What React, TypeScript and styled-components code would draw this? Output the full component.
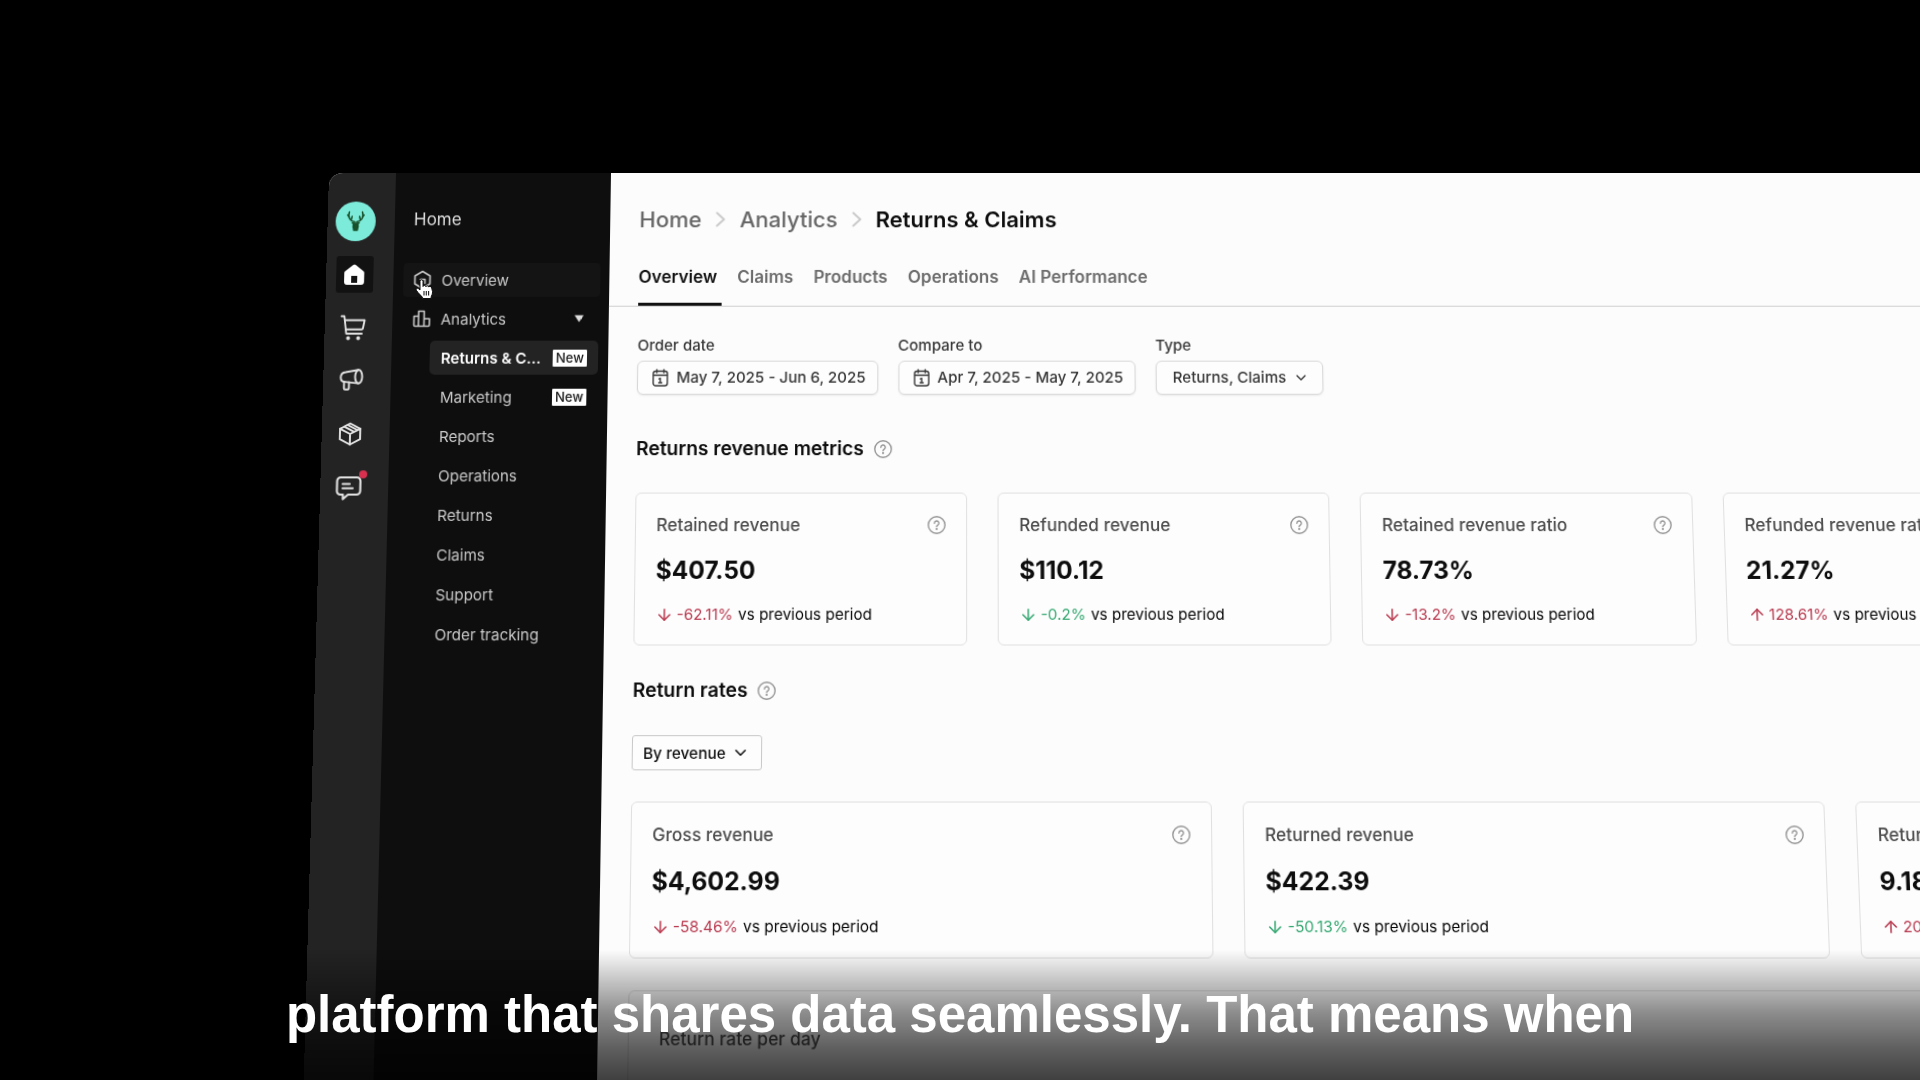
import React from "react";
import styled, { createGlobalStyle } from "styled-components";
import { ArrowDown, ArrowUp, ChevronDown } from "lucide-react";

const GlobalStyle = createGlobalStyle`
  *, *::before, *::after { box-sizing: border-box; }
  body {
    margin: 0;
    background: #000;
    font-family: Inter, "Liberation Sans", sans-serif;
  }
  h1, h2, h3, p, ul, ol, dl, dd { margin: 0; padding: 0; }
  ul, ol { list-style: none; }
  a { color: inherit; text-decoration: none; }
  button, select { font: inherit; color: inherit; }
`;

const Screen = styled.div`
  position: relative;
  height: 100vh;
  overflow: hidden;
  padding-top: 173px;
  background: #000;
`;

const AppWindow = styled.div`
  display: grid;
  grid-template-columns: 67px 215px minmax(0, 1fr);
  min-height: 100vh;
  margin-left: 329px;
  margin-right: -26.3%;
  border-radius: 14px 0 0 0;
  overflow: hidden;
  background: #fcfcfc;
  transform: perspective(4000px) rotateX(10deg);
  transform-origin: calc(50vw - 329px) 0;
`;

/* Icon rail */

const Rail = styled.nav`
  display: flex;
  flex-direction: column;
  align-items: center;
  gap: 16px;
  padding: 29px 11px 0 0;
  background: #232323;
`;

const Logo = styled.a`
  display: grid;
  place-items: center;
  width: 40px;
  height: 40px;
  margin-bottom: -1px;
  border-radius: 50%;
  background: #7debd9;
`;

const RailLink = styled.a<{ $active?: boolean }>`
  position: relative;
  display: grid;
  place-items: center;
  width: 37px;
  height: 37px;
  border-radius: 3px;
  color: #e2e2e2;
  background: ${(p) => (p.$active ? "#121212" : "transparent")};
`;

const AlertDot = styled.span`
  position: absolute;
  top: 2px;
  right: 1px;
  width: 8px;
  height: 8px;
  border-radius: 50%;
  background: #d9304f;
`;

/* Side navigation */

const SideNav = styled.nav`
  padding: 35px 8px 0;
  background: #0e0e0e;
  color: #c9c9c9;
`;

const SideTitle = styled.h2`
  padding-left: 11px;
  margin-bottom: 32px;
  font-size: 17px;
  line-height: 24px;
  font-weight: 400;
  color: #dedede;
`;

const NavList = styled.ul`
  display: flex;
  flex-direction: column;
  gap: 5px;
`;

const NavItem = styled.a<{ $hover?: boolean }>`
  display: flex;
  align-items: center;
  gap: 10px;
  width: 196px;
  height: 34px;
  margin-left: 2px;
  padding: 0 16px 0 10px;
  border-radius: 4px;
  font-size: 15px;
  background: ${(p) => (p.$hover ? "#141414" : "transparent")};
`;

const NavToggle = styled(NavItem)`
  border: 0;
  text-align: left;
  cursor: pointer;
`;

const NavText = styled.span`
  flex: 1;
  min-width: 0;
  overflow: hidden;
  text-overflow: ellipsis;
  white-space: nowrap;
`;

const SubItem = styled.a<{ $current?: boolean }>`
  display: flex;
  align-items: center;
  gap: 8px;
  width: 167px;
  height: 34px;
  margin-left: 30px;
  padding: 0 11px 0 11px;
  border-radius: 5px;
  font-size: 15px;
  font-weight: ${(p) => (p.$current ? 600 : 400)};
  color: ${(p) => (p.$current ? "#fff" : "inherit")};
  background: ${(p) => (p.$current ? "#232323" : "transparent")};
`;

const Badge = styled.span`
  padding: 0 3px;
  border-radius: 1px;
  background: #fff;
  color: #1a1a1a;
  font-size: 13px;
  line-height: 17px;
  font-weight: 500;
`;

/* Main column */

const Main = styled.main`
  color: #050505;
`;

const Header = styled.header`
  padding: 33px 29px 0;
  border-bottom: 1px solid #cfcfcf;
`;

const Crumbs = styled.ol`
  display: flex;
  align-items: center;
  gap: 14px;
  font-size: 22px;
  line-height: 28px;
  color: #666;
  font-weight: 500;
`;

const Crumb = styled.li<{ $current?: boolean }>`
  font-weight: ${(p) => (p.$current ? 600 : 500)};
  color: ${(p) => (p.$current ? "#0d0d0d" : "inherit")};
`;

const Tabs = styled.div`
  display: flex;
  gap: 15px;
  margin-top: 29px;
`;

const Tab = styled.a<{ $current?: boolean }>`
  padding: 4px 5px 15px 0;
  font-size: 17px;
  line-height: 22px;
  font-weight: 600;
  color: ${(p) => (p.$current ? "#111" : "#6c6c6c")};
  border-bottom: 3px solid ${(p) => (p.$current ? "#111" : "transparent")};
`;

const Body = styled.div`
  display: flex;
  flex-direction: column;
  gap: 30px;
  padding: 29px;
`;

const Filters = styled.div`
  display: flex;
  gap: 20px;
  margin-bottom: 10px;
`;

const Field = styled.div`
  display: flex;
  flex-direction: column;
  align-items: flex-start;
  gap: 5px;
  font-size: 15px;
  line-height: 20px;
  color: #363636;
  font-weight: 500;
`;

const DateButton = styled.button`
  display: flex;
  align-items: center;
  gap: 8px;
  height: 34px;
  padding: 0 11px 0 14px;
  border: 1px solid #d8d8d8;
  border-radius: 6px;
  background: #fdfdfd;
  box-shadow: 0 1px 2px rgba(0, 0, 0, 0.08);
  cursor: pointer;
`;

const SelectWrap = styled.span<{ $compact?: boolean }>`
  display: inline-grid;
  align-items: center;
  color: ${(p) => (p.$compact ? "#0d0d0d" : "#363636")};
  select, svg { grid-area: 1 / 1; }
  svg {
    justify-self: end;
    margin-right: ${(p) => (p.$compact ? 12 : 14)}px;
    pointer-events: none;
  }
`;

const Select = styled.select<{ $compact?: boolean }>`
  appearance: none;
  height: 34px;
  padding: ${(p) => (p.$compact ? "0 34px 0 10px" : "0 35px 0 16px")};
  border: 1px solid ${(p) => (p.$compact ? "#c9c9c9" : "#d8d8d8")};
  border-radius: ${(p) => (p.$compact ? 3 : 6)}px;
  background: #fdfdfd;
  box-shadow: ${(p) => (p.$compact ? "none" : "0 1px 2px rgba(0, 0, 0, 0.08)")};
  font-size: 15px;
  font-weight: 500;
`;

const Toolbar = styled.div`
  display: flex;
`;

const SectionTitle = styled.h2`
  display: flex;
  align-items: center;
  gap: 10px;
  font-size: 19px;
  line-height: 27px;
  font-weight: 600;
  color: #0d0d0d;
`;

const HelpButton = styled.button`
  display: inline-flex;
  padding: 0;
  border: 0;
  background: none;
  color: #979797;
  cursor: help;
`;

const Cards = styled.div<{ $columns: number }>`
  display: grid;
  grid-template-columns: repeat(${(p) => p.$columns}, minmax(0, 1fr));
  gap: 30px;
`;

const Card = styled.article`
  display: flex;
  flex-direction: column;
  gap: 14px;
  padding: 20px;
  border: 1px solid #e0e0e0;
  border-radius: 6px;
  background: #fdfdfd;
`;

const CardHead = styled.div`
  display: flex;
  align-items: center;
  justify-content: space-between;
`;

const CardTitle = styled.h3`
  font-size: 17px;
  line-height: 22px;
  font-weight: 500;
  color: #4d4d4d;
  white-space: nowrap;
`;

const Value = styled.p`
  font-size: 24px;
  line-height: 40px;
  font-weight: 700;
  color: #0d0d0d;
`;

const Change = styled.p`
  display: flex;
  align-items: center;
  gap: 5px;
  font-size: 15px;
  line-height: 16px;
  white-space: nowrap;
`;

const Delta = styled.span<{ $good?: boolean }>`
  display: flex;
  align-items: center;
  gap: 3px;
  color: ${(p) => (p.$good ? "#35a872" : "#b93a50")};
`;

const ChartCard = styled.section`
  min-height: 300px;
  padding: 34px 29px;
  border: 1px solid #e0e0e0;
  border-radius: 6px;
`;

/* Overlays */

const Pointer = styled.svg`
  position: absolute;
  top: 278px;
  left: 415px;
`;

const CaptionBar = styled.div`
  position: absolute;
  inset: auto 0 0 0;
  height: 130px;
  padding-top: 37px;
  text-align: center;
  font-family: "Liberation Sans", Arial, sans-serif;
  font-size: 51px;
  line-height: 56px;
  font-weight: 700;
  color: #fff;
  white-space: nowrap;
  background: linear-gradient(
    rgba(0, 0, 0, 0) 0%,
    rgba(0, 0, 0, 0.26) 28%,
    rgba(0, 0, 0, 0.44) 48%,
    rgba(0, 0, 0, 0.62) 75%,
    rgba(0, 0, 0, 0.75) 100%
  );
`;

/* Drawings */

const line = {
  fill: "none",
  stroke: "currentColor",
  strokeLinecap: "round" as const,
  strokeLinejoin: "round" as const,
};

const DeerIcon = () => (
  <svg width="24" height="24" viewBox="0 0 24 24" {...line} stroke="#17502a" strokeWidth="1.500">
    <path d="M11 12.500C7 12 3.500 8.500 5.500 2.500M5.500 8L3.800 5.500M7.500 10.500L8.300 7" />
    <path d="M13 12.500C17 12 20.500 8.500 18.500 2.500M18.500 8L20.200 5.500M16.500 10.500L15.700 7" />
    <path d="M8.500 13.500L11 14.500M15.500 13.500L13 14.500" />
    <path d="M10 14h4l.5 3-.8 4h-3.400l-.8-4z" fill="#17502a" />
  </svg>
);

const HouseIcon = () => (
  <svg width="22" height="22" viewBox="0 0 22 22">
    <path
      fill="#fff"
      fillRule="evenodd"
      d="M9.700 1a2 2 0 0 1 2.600 0l7.700 6.300a2.500 2.500 0 0 1 .9 2V18a3 3 0 0 1-3 3H4a3 3 0 0 1-3-3V9.300a2.500 2.500 0 0 1 .9-2zM8 12v7h6v-7z"
    />
  </svg>
);

const CartIcon = () => (
  <svg width="26" height="26" viewBox="0 0 26 26" {...line} strokeWidth="1.900">
    <path d="M1.500 1.500h2.800l2.200 17.500h15.500" />
    <path d="M4.800 5.500h19.700L23 13.500q-.2 1.200-1.400 1.200H6" />
    <circle cx="8.500" cy="23.500" r="1" fill="currentColor" />
    <circle cx="18.500" cy="23.500" r="1" fill="currentColor" />
  </svg>
);

const MegaphoneIcon = () => (
  <svg width="24" height="24" viewBox="0 1 24 24" {...line} strokeWidth="1.900">
    <ellipse cx="19" cy="9" rx="3.500" ry="6.700" />
    <path d="M18.500 2.300L6 4.500C3 4.800 1.300 7 1.300 9.800c0 2.700 1.500 4.300 4.200 4.300l13 1.500" />
    <path d="M4.700 14v6.500q0 1.300 1.300 1.300h2.300q1.300 0 1.300-1.300v-6" />
  </svg>
);

const BoxIcon = () => (
  <svg width="24" height="24" viewBox="0 0 24 24" {...line} strokeWidth="1.900">
    <path d="M12 1.500L22 6.800v10.400L12 22.500 2 17.200V6.800z" />
    <path d="M2 6.800l10 5.200 10-5.200M12 12v10.500M6.500 4.800l9.500 5M9.500 3l9.500 5" />
  </svg>
);

const ChatIcon = () => (
  <svg width="26" height="26" viewBox="0 0 26 26" {...line} strokeWidth="2.100">
    <path d="M5 3h16a3.500 3.500 0 0 1 3.500 3.500v10A3.500 3.500 0 0 1 21 20h-8.500L7.500 24.500V20H5a3.500 3.500 0 0 1-3.500-3.500v-10A3.500 3.500 0 0 1 5 3z" />
    <path d="M7 9.500h7M7 13.700h10" />
  </svg>
);

const HexHomeIcon = () => (
  <svg width="18" height="20" viewBox="0 0 18 20" {...line} strokeWidth="1.600">
    <path d="M9 1.500l7.500 4.500v8L9 18.500 1.500 14V6z" />
    <path d="M7 9.500h4.500v4" />
  </svg>
);

const BarsIcon = () => (
  <svg width="18" height="18" viewBox="0 0 18 18" {...line} strokeWidth="1.600">
    <path d="M6 16.500H2.500q-1 0-1-1V6.500H6zM6 16.500V1.500h5.500v15zM11.500 16.500H16q.8 0 .8-1V9h-5.300" />
  </svg>
);

const CaretIcon = () => (
  <svg width="9" height="8" viewBox="0 0 9 8" fill="#dedede">
    <path d="M0 .5h9L4.500 7.500z" />
  </svg>
);

const CrumbArrow = () => (
  <svg width="10" height="18" viewBox="0 0 10 18" {...line} stroke="#c9c9c9" strokeWidth="2">
    <path d="M1.500 2.500L8.500 9l-7 6.500" />
  </svg>
);

const CalendarIcon = () => (
  <svg width="16" height="18" viewBox="0 0 16 18" {...line} strokeWidth="1.400">
    <rect x="1" y="2.500" width="14" height="14.500" rx="2.500" />
    <path d="M1.500 6.500h13M4.500 1v3M11.500 1v3M6.800 10.200L8 9.500V14M6.500 14h3" />
  </svg>
);

const Help = ({ about }: { about: string }) => (
  <HelpButton type="button" aria-label={about}>
    <svg width="18" height="18" viewBox="0 0 18 18" {...line} strokeWidth="1.400">
      <circle cx="9" cy="9" r="8.200" />
      <path d="M6.800 7.200a2.200 2.200 0 1 1 3.300 1.900c-.8.500-1.100.8-1.100 1.500" />
      <circle cx="9" cy="12.900" r=".4" fill="currentColor" />
    </svg>
  </HelpButton>
);

const HandPointer = () => (
  <Pointer width="20" height="22" viewBox="0 0 20 22" aria-hidden="true">
    <path
      d="M5 3.500q0-1.700 1.500-1.700T8 3.500v5q.2-1 1.400-1t1.500 1.200q.3-.9 1.400-.9t1.400 1.300q.4-.7 1.300-.7 1.400 0 1.700 1.600l.8 3.500q.2 1.500-.4 3l-1 2.500v1.500H7.500v-1.200L3 14.500l-1.700-2.300q-.5-1.200.4-1.800 1-.5 2 .4L5 12z"
      fill="#fff"
      stroke="#111"
      strokeWidth="1"
      strokeLinejoin="round"
    />
    <path d="M9 13v4.500M11.300 13v4.500M13.600 13v4.500" stroke="#222" strokeWidth="1.100" />
  </Pointer>
);

/* Data */

const subPages = [
  { label: "Returns & Claims", isNew: true, current: true },
  { label: "Marketing", isNew: true },
  { label: "Reports" },
  { label: "Operations" },
  { label: "Returns" },
  { label: "Claims" },
  { label: "Support" },
  { label: "Order tracking" },
];

const tabs = ["Overview", "Claims", "Products", "Operations", "AI Performance"];

type Metric = { title: string; value: string; change: string; up?: boolean; good?: boolean };

const revenueMetrics: Metric[] = [
  { title: "Retained revenue", value: "$407.50", change: "-62.11%" },
  { title: "Refunded revenue", value: "$110.12", change: "-0.2%", good: true },
  { title: "Retained revenue ratio", value: "78.73%", change: "-13.2%" },
  { title: "Refunded revenue ratio", value: "21.27%", change: "128.61%", up: true },
];

const rateMetrics: Metric[] = [
  { title: "Gross revenue", value: "$4,602.99", change: "-58.46%" },
  { title: "Returned revenue", value: "$422.39", change: "-50.13%", good: true },
  { title: "Return rate", value: "9.18%", change: "20%", up: true },
];

const MetricCard = ({ title, value, change, up, good }: Metric) => {
  const Arrow = up ? ArrowUp : ArrowDown;
  return (
    <Card>
      <CardHead>
        <CardTitle>{title}</CardTitle>
        <Help about={title} />
      </CardHead>
      <Value>{value}</Value>
      <Change>
        <Delta $good={good}>
          <Arrow size={18} strokeWidth={2} />
          {change}
        </Delta>
        vs previous period
      </Change>
    </Card>
  );
};

export default function App() {
  return (
    <Screen>
      <GlobalStyle />
      <AppWindow>
        <Rail aria-label="Apps">
          <Logo href="#" aria-label="Account"><DeerIcon /></Logo>
          <RailLink href="#" aria-label="Home" $active><HouseIcon /></RailLink>
          <RailLink href="#" aria-label="Orders"><CartIcon /></RailLink>
          <RailLink href="#" aria-label="Marketing"><MegaphoneIcon /></RailLink>
          <RailLink href="#" aria-label="Products"><BoxIcon /></RailLink>
          <RailLink href="#" aria-label="Messages">
            <ChatIcon />
            <AlertDot />
          </RailLink>
        </Rail>

        <SideNav aria-label="Home">
          <SideTitle>Home</SideTitle>
          <NavList>
            <li>
              <NavItem href="#" $hover>
                <HexHomeIcon />
                <NavText>Overview</NavText>
              </NavItem>
            </li>
            <li>
              <NavToggle as="button" type="button" aria-expanded="true">
                <BarsIcon />
                <NavText>Analytics</NavText>
                <CaretIcon />
              </NavToggle>
            </li>
            {subPages.map((page) => (
              <li key={page.label}>
                <SubItem href="#" $current={page.current}>
                  <NavText>{page.label}</NavText>
                  {page.isNew && <Badge>New</Badge>}
                </SubItem>
              </li>
            ))}
          </NavList>
        </SideNav>

        <Main>
          <Header>
            <Crumbs>
              <Crumb><a href="#">Home</a></Crumb>
              <CrumbArrow />
              <Crumb><a href="#">Analytics</a></Crumb>
              <CrumbArrow />
              <Crumb $current>Returns &amp; Claims</Crumb>
            </Crumbs>
            <Tabs>
              {tabs.map((tab, i) => (
                <Tab key={tab} href="#" $current={i === 0}>{tab}</Tab>
              ))}
            </Tabs>
          </Header>

          <Body>
            <Filters>
              <Field>
                <label htmlFor="order-date">Order date</label>
                <DateButton id="order-date" type="button">
                  <CalendarIcon />
                  May 7, 2025 - Jun 6, 2025
                </DateButton>
              </Field>
              <Field>
                <label htmlFor="compare-to">Compare to</label>
                <DateButton id="compare-to" type="button">
                  <CalendarIcon />
                  Apr 7, 2025 - May 7, 2025
                </DateButton>
              </Field>
              <Field>
                <label htmlFor="type">Type</label>
                <SelectWrap>
                  <Select id="type"><option>Returns, Claims</option></Select>
                  <ChevronDown size={16} strokeWidth={2} />
                </SelectWrap>
              </Field>
            </Filters>

            <SectionTitle>
              Returns revenue metrics
              <Help about="Returns revenue metrics" />
            </SectionTitle>
            <Cards $columns={5}>
              {revenueMetrics.map((m) => <MetricCard key={m.title} {...m} />)}
            </Cards>

            <SectionTitle>
              Return rates
              <Help about="Return rates" />
            </SectionTitle>
            <Toolbar>
              <SelectWrap $compact>
                <Select $compact aria-label="Group return rates"><option>By revenue</option></Select>
                <ChevronDown size={18} strokeWidth={2} />
              </SelectWrap>
            </Toolbar>
            <Cards $columns={3}>
              {rateMetrics.map((m) => <MetricCard key={m.title} {...m} />)}
            </Cards>

            <ChartCard>
              <CardTitle>Return rate per day</CardTitle>
            </ChartCard>
          </Body>
        </Main>
      </AppWindow>

      <HandPointer />
      <CaptionBar>platform that shares data seamlessly. That means when</CaptionBar>
    </Screen>
  );
}
